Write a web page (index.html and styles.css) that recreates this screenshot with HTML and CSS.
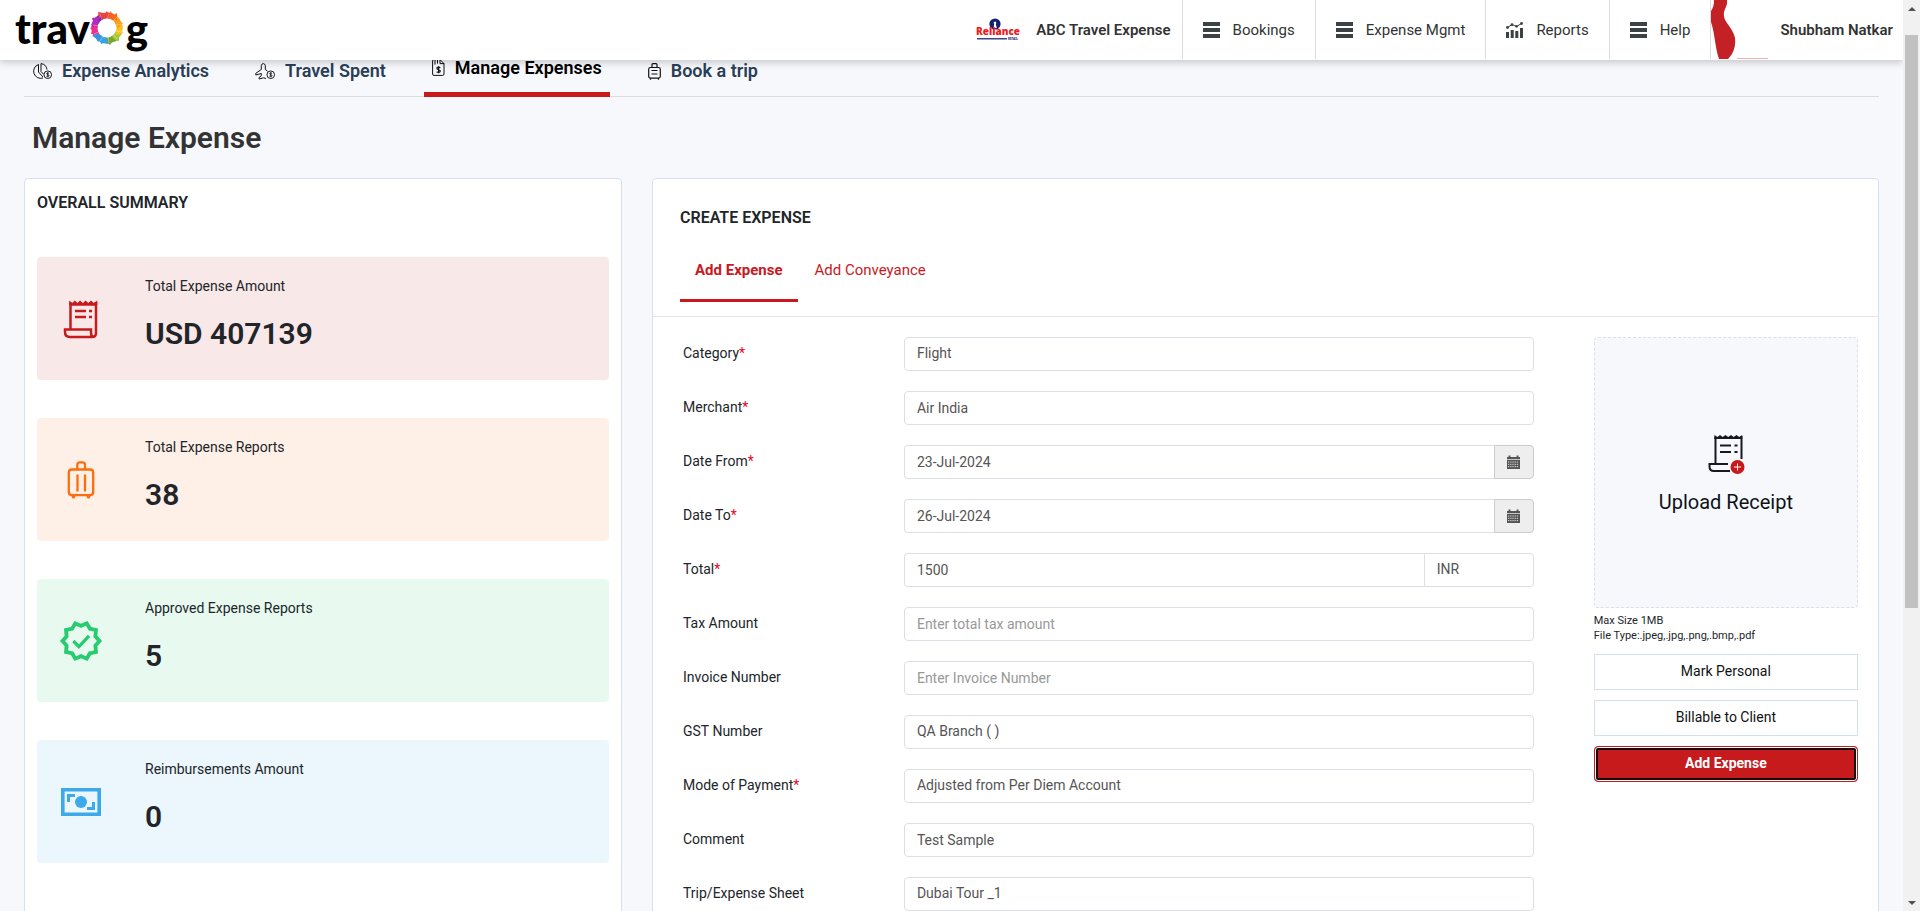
FILE: index.html
```html
<!DOCTYPE html>
<html lang="en">
<head>
<meta charset="utf-8">
<meta name="viewport" content="width=device-width, initial-scale=1">
<title>Manage Expense</title>
<link rel="stylesheet" href="styles.css">
</head>
<body>
<svg class="sprite" aria-hidden="true">
  <symbol id="bars" viewBox="0 0 17 16"><path fill="#3b4243" d="M0 0h17v4H0zM0 6h17v4H0zM0 12h17v4H0z"/></symbol>
  <symbol id="coin" viewBox="0 0 10 10"><circle cx="5" cy="5" r="4" fill="#f6f8fc" stroke="#111"/><path d="M6.4 3.6C5 2.6 3.7 3.2 3.8 4.1c.2 1 2.5.7 2.5 1.8 0 .9-1.500 1.300-2.700.5M5 2.300v5.400" fill="none" stroke="#111" stroke-width=".9"/></symbol>
  <symbol id="calendar" viewBox="0 0 13 14"><path fill="#555" d="M0 2h1.500V.5h2V2h6V.5h2V2H13v2.300H0z"/><path fill="#555" d="M0 5h13v9H0z"/><path stroke="#eee" stroke-width=".9" stroke-dasharray="1.300 .9" d="M1 7h11M1 9.300h11M1 11.600h11"/></symbol>
</svg>

<header class="topbar">
  <a class="logo" href="#" aria-label="travog">
    <span>trav</span>
    <svg class="logo-ring" viewBox="0 0 34 34" aria-hidden="true">
      <g fill="none" stroke-width="6">
        <path stroke="#e8433f" d="M10 6.500A12.500 12.500 0 0 1 19 4.600"/>
        <path stroke="#f5691d" d="M18 4.500A12.500 12.500 0 0 1 25.500 7.800"/>
        <path stroke="#f9a11b" d="M25 7.500A12.500 12.500 0 0 1 29.400 15"/>
        <path stroke="#fbc21a" d="M29.300 14A12.500 12.500 0 0 1 28 22.500"/>
        <path stroke="#a4c93a" d="M28.500 21A12.500 12.500 0 0 1 22.500 28"/>
        <path stroke="#7ba428" d="M23.500 27.500A12.500 12.500 0 0 1 16 29.500"/>
        <path stroke="#35a3e6" d="M17 29.500A12.500 12.500 0 0 1 9 26.600"/>
        <path stroke="#3f8fe0" d="M10 27.400A12.500 12.500 0 0 1 5.800 22.500"/>
        <path stroke="#ee2f8c" d="M6.300 23.500A12.500 12.500 0 0 1 4.600 15"/>
        <path stroke="#b62ac0" d="M4.500 17A12.500 12.500 0 0 1 8 8.400"/>
        <path stroke="#7a2aa8" d="M7 9.500A12.500 12.500 0 0 1 11.500 5.800"/>
      </g>
      <path fill="#e8433f" d="M8 1l6 1-5 6zM16 0l5 4-4 4z"/><path fill="#f5691d" d="M20 0l4 4 3-2v7l-6-1z"/><path fill="#f9a11b" d="M29 6l1 5 3 1-5 6-3-6z"/><path fill="#fbc21a" d="M33 15l-1 5 1 2-7 3 1-7z"/><path fill="#a4c93a" d="M32 23l-3 3v4l-7-1 3-5z"/><path fill="#7ba428" d="M27 30l-5 1-2 3-5-5 6-3z"/><path fill="#35a3e6" d="M19 33l-5-1-3 1-2-7 7 1z"/><path fill="#3f8fe0" d="M8 31l-2-4-4-2 5-3 4 5z"/><path fill="#ee2f8c" d="M1 23l1-4-2-2 6-2 3 8z"/><path fill="#b62ac0" d="M1 14l2-4-1-3 8-1-3 8z"/>
      <path stroke="#fff" stroke-opacity=".55" stroke-width=".6" d="M10 3l2 6M19 3l-2 5M27 6l-4 4M32 13l-6 1M32 21l-6-1M27 28l-3-4M19 32l-1-6M10 30l3-5M4 23l5-2M3 14l6 1"/>
      <circle cx="17" cy="17" r="9.200" fill="#fff"/>
    </svg>
    <span>g</span>
  </a>

  <div class="company">
    <svg class="company-logo" viewBox="0 0 44 24" role="img" aria-label="Reliance Retail">
      <circle cx="19" cy="6" r="5.600" fill="#13206b"/><path fill="#fff" d="M17.500 10l.7-4a1.300 1.300 0 1 1 1.600 0l1 4z"/>
      <text class="brand-name" x="22" y="17" text-anchor="middle">Reliance</text>
      <path fill="#3a4589" d="M1 20h30v1.500H1z"/>
      <text class="brand-sub" x="37" y="22" text-anchor="middle">RETAIL</text>
    </svg>
    <strong>ABC Travel Expense</strong>
  </div>
  <nav class="menu">
    <a href="#"><svg class="menu-icon" aria-hidden="true"><use href="#bars"/></svg>Bookings</a>
    <a href="#"><svg class="menu-icon" aria-hidden="true"><use href="#bars"/></svg>Expense Mgmt</a>
    <a href="#"><svg class="menu-icon" viewBox="0 0 17 16" aria-hidden="true"><path fill="#3b4243" d="M0 10h3v6H0zM4.700 8h3v8h-3zM9.300 9h3v7h-3zM14 6h3v10h-3z"/><path fill="none" stroke="#3b4243" d="M1.500 5.500 6 2.500l4.500 2 5-3"/><g fill="#3b4243"><circle cx="1.500" cy="5.500" r="1.400"/><circle cx="6" cy="2.700" r="1.400"/><circle cx="10.500" cy="4.300" r="1.400"/><circle cx="15.500" cy="1.500" r="1.400"/></g></svg>Reports</a>
    <a href="#"><svg class="menu-icon" aria-hidden="true"><use href="#bars"/></svg>Help</a>
  </nav>
  <a class="user" href="#">
    <svg class="avatar" viewBox="0 0 60 59" aria-hidden="true"><path fill="#c42127" d="M3 0h13c1 7-4 9-3 16 0 6 9 12 11 22 1 9-2 16-7 21H8C4 48 4 34 0 22V11c2-3 3-6 3-11z"/><path fill="#eab3b5" d="M26 58h31v1H26z"/></svg>
    <strong>Shubham Natkar</strong>
  </a>
</header>

<main class="page">
  <nav class="tabs">
    <a class="tab" href="#">
      <svg class="tab-icon wide" viewBox="0 0 20 17" aria-hidden="true"><path fill="none" stroke="#111" d="M6.500 1.500A7 7 0 1 0 11 15M9 .6v8l3 3M9 .6a7 7 0 0 1 6 6M6.500 1.500v7.500l4.500 5"/><use href="#coin" x="11" y="7" width="9.500" height="9.500"/></svg>
      Expense Analytics</a>
    <a class="tab" href="#">
      <svg class="tab-icon wide" viewBox="0 0 20 17" aria-hidden="true"><path fill="none" stroke="#111" stroke-linejoin="round" d="M11 15.500 8.500 14.800 4.200 16 4 14.600 6.300 12.800V10.500L.8 12V10.300L6.300 6.500V2.500Q6.800.6 8.300.6T10.300 2.500V6.500L12.500 8"/><use href="#coin" x="11" y="7" width="9.500" height="9.500"/></svg>
      Travel Spent</a>
    <a class="tab active" href="#" aria-current="page">
      <svg class="tab-icon" viewBox="0 0 13 17" aria-hidden="true"><path fill="none" stroke="#111" d="M.6 2Q.6.6 2 .6h6l4 4V15q0 1.400-1.400 1.400H2Q.6 16.400.6 15zM3 .6v5M5.500.6v4M8 .6v4h4"/><path fill="none" stroke="#111" stroke-width="1.200" d="M8.300 8.800C7 7.800 4.900 8 4.900 9.500c0 1.600 3.400.9 3.400 2.600 0 1.500-2.300 1.600-3.700.6M6.600 7.300v7"/></svg>
      Manage Expenses</a>
    <a class="tab" href="#">
      <svg class="tab-icon" viewBox="0 0 13 17" aria-hidden="true"><path fill="none" stroke="#111" stroke-width="1.200" d="M4 4.500V1.600Q4 .6 5 .6h3q1 0 1 1v2.900M2.500 4.500h8q1.800 0 1.800 1.800v7q0 1.800-1.800 1.800h-8Q.7 15.100.7 13.300v-7q0-1.800 1.800-1.800zM3.500 7.500h6M3.500 11h6M2.500 15v1.700M10.500 15v1.700"/></svg>
      Book a trip</a>
  </nav>

  <h1 class="page-title">Manage Expense</h1>

  <div class="columns">
    <section class="card summary">
      <h2>OVERALL SUMMARY</h2>
      <div class="tiles">
        <article class="tile red">
          <svg class="tile-icon" viewBox="0 0 44 44" aria-hidden="true"><path fill="none" stroke="#c61a1d" stroke-width="2.500" d="M11.500 33V5.500M37 5v31q0 4-4 4H11q-5 0-5-5v-2.500h26V36q0 4 3 4M11 7.500h26"/><path fill="#c61a1d" d="M10.200 3.500l3 2.500 2.500-2.500L18.500 6l2.500-2.500L24 6l2.500-2.500L29.300 6 32 3.500 34.800 6l3.500-2.500V8H10.200z"/><path fill="none" stroke="#c61a1d" stroke-width="2.500" d="M16 14h11M16 20h11M30 14h3M30 20h3"/></svg>
          <div class="tile-text"><p>Total Expense Amount</p><strong>USD 407139</strong></div>
        </article>
        <article class="tile orange">
          <svg class="tile-icon" viewBox="0 0 44 44" aria-hidden="true"><path fill="none" stroke="#fc6d0e" stroke-width="2.300" d="M18.300 11V7q0-2.600 2.600-2.600h2.600Q26 4.400 26 7v4M13 11.500h18q3.200 0 3.200 3.200V34q0 3.200-3.200 3.200H13q-3.200 0-3.200-3.200V14.700q0-3.200 3.200-3.200zM18.500 16.500v17M26 16.500v17"/><path fill="#fc6d0e" d="M12 37h5l-1.500 3.500h-2zM27 37h5l-1.500 3.500h-2z"/></svg>
          <div class="tile-text"><p>Total Expense Reports</p><strong>38</strong></div>
        </article>
        <article class="tile green">
          <svg class="tile-icon" viewBox="0.500 0.500 23 23" aria-hidden="true"><path fill="#27cb70" d="M23 11.990l-2.440-2.790.340-3.690-3.610-.820L15.400 1.500 12 2.960 8.600 1.500 6.710 4.690 3.100 5.500l.340 3.700L1 11.990l2.440 2.790-.340 3.700 3.610.820L8.600 22.500l3.400-1.470 3.400 1.460 1.890-3.190 3.610-.820-.340-3.690L23 11.990zm-3.950 1.480l-.56.65.08.85.18 1.950-1.900.43-.84.19-.44.74-.99 1.680-1.780-.77-.80-.34-.79.34-1.780.77-.99-1.670-.44-.74-.84-.19-1.900-.43.18-1.960.08-.85-.56-.64L3.670 12l1.290-1.480.56-.65-.09-.86-.18-1.940 1.900-.43.84-.19.44-.74.99-1.680 1.780.77.80.34.79-.34 1.780-.77.99 1.680.44.740.840.190 1.900.43-.18 1.950-.08.85.56.65 1.290 1.470-1.280 1.480z"/><path fill="none" stroke="#27cb70" stroke-width="1.700" d="M8 12l2.900 2.900L16.200 9.300"/></svg>
          <div class="tile-text"><p>Approved Expense Reports</p><strong>5</strong></div>
        </article>
        <article class="tile blue">
          <svg class="tile-icon" viewBox="0 0 44 44" aria-hidden="true"><path fill="none" stroke="#3da9ea" stroke-width="3.600" d="M3.800 9.800h36.400v24.400H3.800z"/><circle cx="22" cy="22" r="6" fill="#3da9ea"/><path fill="none" stroke="#3da9ea" stroke-width="3" d="M9.500 22v-6.500H16M34.500 22v6.500H28"/></svg>
          <div class="tile-text"><p>Reimbursements Amount</p><strong>0</strong></div>
        </article>
      </div>
    </section>

    <section class="card create">
      <div class="create-head">
        <h2>CREATE EXPENSE</h2>
        <div class="subtabs">
          <a class="subtab current" href="#">Add Expense</a>
          <a class="subtab" href="#">Add Conveyance</a>
        </div>
      </div>
      <form class="create-body">
        <div class="fields">
          <div class="field"><label for="category">Category<i>*</i></label><div class="control"><select id="category"><option>Flight</option></select></div></div>
          <div class="field"><label for="merchant">Merchant<i>*</i></label><div class="control"><input id="merchant" type="text" value="Air India"></div></div>
          <div class="field"><label for="from">Date From<i>*</i></label><div class="control joined"><input id="from" type="text" value="23-Jul-2024"><button class="addon" type="button" aria-label="Pick start date"><svg aria-hidden="true"><use href="#calendar"/></svg></button></div></div>
          <div class="field"><label for="to">Date To<i>*</i></label><div class="control joined"><input id="to" type="text" value="26-Jul-2024"><button class="addon" type="button" aria-label="Pick end date"><svg aria-hidden="true"><use href="#calendar"/></svg></button></div></div>
          <div class="field"><label for="total">Total<i>*</i></label><div class="control joined"><input id="total" type="text" value="1500"><select class="currency" aria-label="Currency"><option>INR</option></select></div></div>
          <div class="field"><label for="tax">Tax Amount</label><div class="control"><input id="tax" type="text" placeholder="Enter total tax amount"></div></div>
          <div class="field"><label for="invoice">Invoice Number</label><div class="control"><input id="invoice" type="text" placeholder="Enter Invoice Number"></div></div>
          <div class="field"><label for="gst">GST Number</label><div class="control"><select id="gst"><option>QA Branch ( )</option></select></div></div>
          <div class="field"><label for="payment">Mode of Payment<i>*</i></label><div class="control"><select id="payment"><option>Adjusted from Per Diem Account</option></select></div></div>
          <div class="field"><label for="comment">Comment</label><div class="control"><input id="comment" type="text" value="Test Sample"></div></div>
          <div class="field"><label for="sheet">Trip/Expense Sheet</label><div class="control"><select id="sheet"><option>Dubai Tour _1</option></select></div></div>
        </div>
        <div class="receipt">
          <button class="upload" type="button">
            <svg viewBox="-1 0 38 40" aria-hidden="true"><path fill="none" stroke="#16191f" stroke-width="2" d="M7.500 29V3M33.500 2v23M7 4h27M22 37H6q-4.500 0-4.500-4.500V30H20"/><path fill="#16191f" d="M6.500 1l3 2 2.500-2 2.700 2 2.700-2 2.800 2 2.800-2 2.700 2 2.800-2 2.700 2 3-2v4h-28z"/><path fill="none" stroke="#16191f" stroke-width="2.200" d="M12 11.500h11M12 18h11M26.500 11.500h3M26.500 18h3"/><circle cx="29.500" cy="33" r="7" fill="#c61a1d"/><path stroke="#fff" d="M26 33h7M29.500 29.500v7"/></svg>
            Upload Receipt
          </button>
          <p class="hint">Max Size 1MB<br>File Type:.jpeg,.jpg,.png,.bmp,.pdf</p>
          <div class="actions">
            <button class="btn" type="button">Mark Personal</button>
            <button class="btn" type="button">Billable to Client</button>
            <button class="btn primary" type="button">Add Expense</button>
          </div>
        </div>
      </form>
    </section>
  </div>
</main>

<div class="scrollbar" aria-hidden="true"><span class="arrow up"></span><span class="track"><span class="thumb"></span></span><span class="arrow down"></span></div>
</body>
</html>
```

FILE: styles.css
```css
* { box-sizing: border-box; }

body {
  margin: 0;
  height: 100vh;
  overflow: hidden;
  padding-right: 17px;
  background: #f6f8fc;
  color: #212529;
  font: 14px/20px Roboto, "Liberation Sans", sans-serif;
}

h1, h2, p { margin: 0; }
a { color: inherit; text-decoration: none; }
button, input, select { font: inherit; margin: 0; }
.sprite { display: none; }

/* Top bar */
.topbar {
  position: relative;
  z-index: 2;
  display: flex;
  height: 60px;
  padding-left: 15px;
  background: #fff;
  color: #333;
  font-size: 15px;
  box-shadow: 0 2px 8px rgba(0, 0, 0, .22);
}
.topbar strong { font-weight: 600; }
.logo {
  display: flex;
  align-items: center;
  margin-right: auto;
  color: #000;
  font: 900 42px/52px Lato, sans-serif;
}
.logo span { padding-bottom: 4px; }
.logo-ring { width: 34px; height: 34px; margin: 0 2px 4px 0; }
.company { display: flex; align-items: center; gap: 16px; padding-right: 11px; }
.company-logo { width: 44px; height: 24px; }
.brand-name { font: 800 10px "Open Sans", "Noto Sans", sans-serif; fill: #ec1c24; }
.brand-sub { font: 700 3px "Noto Sans", sans-serif; fill: #13206b; }
.menu { display: flex; }
.menu a {
  display: flex;
  align-items: center;
  gap: 13px;
  height: 59px;
  padding: 0 20px;
  border-left: 1px solid #ddd;
}
.menu-icon { width: 17px; height: 16px; }
.user { display: flex; align-items: center; gap: 9px; height: 59px; padding-right: 10px; border-left: 1px solid #ddd; }
.avatar { width: 60px; height: 59px; }

/* Page */
.page { padding: 0 24px; }
.tabs {
  display: flex;
  align-items: flex-end;
  height: 37px;
  border-bottom: 1px solid #dcdcdc;
}
.tab {
  display: flex;
  align-items: center;
  gap: 10px;
  height: 50px;
  margin-right: 30px;
  padding: 0 8px;
  color: #2b3e57;
  font-size: 18px;
  font-weight: 600;
  white-space: nowrap;
}
.tab.active {
  margin-bottom: -1px;
  padding-bottom: 4px;
  border-bottom: 5px solid #c61a1d;
  color: #000;
}
.tab-icon { flex: none; width: 13px; height: 17px; }
.tab-icon.wide { width: 20px; }
.page-title {
  padding: 21px 8px 20px;
  color: #333;
  font-size: 30px;
  font-weight: 600;
  line-height: 40px;
}

.columns { display: grid; grid-template-columns: 598fr 1227fr; gap: 30px; align-items: stretch; }
.card { min-width: 0; background: #fff; border: 1px solid #d7e0ee; border-radius: 4px; }
.card h2 { font-size: 16px; font-weight: 600; line-height: 24px; }

/* Summary */
.summary { padding: 12px; }
.tiles { display: grid; gap: 38px; margin-top: 42px; }
.tile { display: flex; align-items: center; gap: 42px; padding: 19px 22px 28px; border-radius: 4px; }
.tile-icon { flex: none; width: 44px; height: 44px; margin-top: 10px; }
.tile-text p { margin-bottom: 20px; }
.tile-text strong { display: block; font-size: 30px; line-height: 36px; font-weight: 600; }
.red { background: #f8e8e8; }
.orange { background: #fff0e7; }
.green { background: #e8faf0; }
.blue { background: #ebf6fd; }

/* Create expense */
.create-head { padding: 27px 27px 14px; border-bottom: 1px solid #e3e5e8; }
.subtabs { display: flex; gap: 2px; margin-top: 15px; color: #c9191e; font-size: 15px; }
.subtab { padding: 15px 15px 19px; border-bottom: 3px solid transparent; }
.subtab.current { border-color: #c9191e; font-weight: 700; }
.create-body {
  display: grid;
  grid-template-columns: 850fr 264fr;
  gap: 60px;
  padding: 20px 20px 20px 30px;
}
.fields { display: grid; gap: 20px; align-content: start; }
.field { display: grid; grid-template-columns: 221fr 630fr; }
.field label { padding-top: 6px; }
.field i { color: #f00023; font-style: normal; }
.control { display: flex; }
.control input, .control select {
  flex: 1;
  width: 0;
  height: 34px;
  padding: 6px 12px;
  border: 1px solid #dcdfe5;
  border-radius: 4px;
  background: #fff;
  color: #555;
  appearance: none;
}
.control select { padding: 5px 12px 7px; }
.control input::placeholder { color: #999; }
.joined input { border-radius: 4px 0 0 4px; border-right: 0; }
.control .currency { flex: 0 0 110px; border-radius: 0 4px 4px 0; }
.addon {
  display: grid;
  place-items: center;
  width: 40px;
  height: 34px;
  padding: 0;
  border: 1px solid #ccc;
  border-radius: 0 4px 4px 0;
  background: #eee;
}
.addon svg { width: 13px; height: 14px; }

.upload {
  display: flex;
  flex-direction: column;
  align-items: center;
  justify-content: center;
  gap: 16px;
  width: 100%;
  height: 271px;
  padding: 2px 0 0;
  border: 1px dashed #d9dfeb;
  border-radius: 4px;
  background: #f6f8fc;
  color: #0f1216;
  font-size: 20px;
  line-height: 24px;
}
.upload svg { width: 38px; height: 40px; }
.hint { margin: 5px 0 11px; font-size: 11px; line-height: 15px; }
.actions { display: grid; gap: 10px; }
.btn { height: 36px; padding: 0 12px 2px; border: 1px solid #d3dfed; background: #fff; color: #111; }
.btn.primary {
  border-color: #c61a1d;
  border-radius: 4px;
  background: #c61a1d;
  box-shadow: inset 0 0 0 1px #fff, inset 0 0 0 3px #101010;
  color: #fff;
  font-weight: 700;
}

/* Scrollbar */
.scrollbar {
  position: fixed;
  z-index: 3;
  top: 0;
  right: 0;
  bottom: 0;
  display: flex;
  flex-direction: column;
  align-items: center;
  width: 17px;
  padding: 6px 0;
  background: #f1f1f1;
}
.arrow { border: 4px solid transparent; }
.up { border-top: 0; border-bottom-color: #505050; margin-top: 1px; }
.down { border-bottom: 0; border-top-color: #505050; }
.track { flex: 1; width: 13px; padding: 24px 0; }
.thumb { display: block; height: 68%; background: #c1c1c1; }
```
